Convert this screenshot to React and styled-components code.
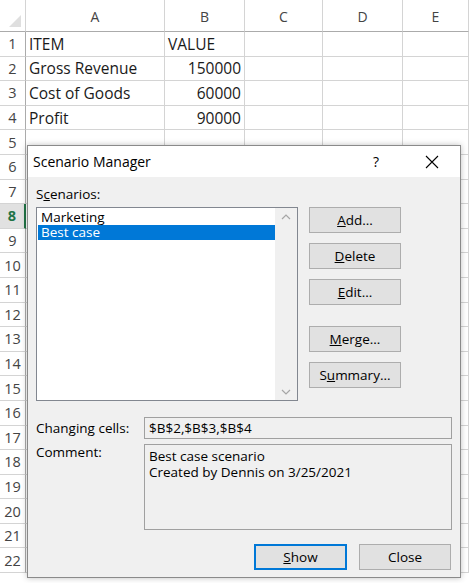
import React from 'react'
import styled, { createGlobalStyle } from 'styled-components'

const GlobalStyle = createGlobalStyle`
  html, body {
    margin: 0;
    padding: 0;
    background: #ffffff;
    overflow: hidden;
  }
  body {
    font-family: "Open Sans", "Noto Sans", sans-serif;
  }
`

const Page = styled.div`
  position: relative;
  width: 469px;
  height: 583px;
  overflow: hidden;
  background: #ffffff;
`

const Sheet = styled.div`
  display: grid;
  grid-template-columns: 26px 139px 80px 78px 80px 66px;
  grid-template-rows: 32px repeat(22, 24.6px);
`

const Corner = styled.div`
  position: relative;
  border-right: 1px solid #d4d4d4;
  border-bottom: 1px solid #ababab;
  &::after {
    content: '';
    position: absolute;
    right: 4px;
    bottom: 4px;
    border-style: solid;
    border-width: 0 0 12px 12px;
    border-color: transparent transparent #dfdfdf transparent;
  }
`

const ColHead = styled.div`
  display: flex;
  align-items: center;
  justify-content: center;
  padding-top: 2px;
  font-family: "Open Sans", sans-serif;
  font-size: 14px;
  color: #444444;
  border-right: 1px solid #d4d4d4;
  border-bottom: 1px solid #ababab;
`

const RowHead = styled.div`
  display: flex;
  align-items: center;
  justify-content: center;
  font-family: "Open Sans", sans-serif;
  font-size: 14.5px;
  color: ${p => (p.$active ? '#217346' : '#444444')};
  font-weight: ${p => (p.$active ? 700 : 400)};
  background: ${p => (p.$active ? '#e1e1e1' : '#ffffff')};
  border-bottom: 1px solid #d4d4d4;
  border-right: ${p => (p.$active ? '2px solid #217346' : '1px solid #ababab')};
`

const Cell = styled.div`
  display: flex;
  align-items: center;
  justify-content: ${p => (p.$num ? 'flex-end' : 'flex-start')};
  padding: 0 3px 0 3px;
  font-family: "Open Sans", sans-serif;
  font-size: 15.5px;
  color: #1a1a1a;
  white-space: nowrap;
  overflow: hidden;
  border-right: 1px solid #d4d4d4;
  border-bottom: 1px solid #d4d4d4;
`

const Dialog = styled.div`
  position: absolute;
  left: 27px;
  top: 145px;
  width: 434px;
  height: 433px;
  display: flex;
  flex-direction: column;
  background: #f0f0f0;
  border: 1px solid #8a8a8a;
  box-shadow: 0 0 6px rgba(0, 0, 0, 0.25);
  font-family: "Open Sans", "Noto Sans", sans-serif;
  font-size: 13.5px;
  color: #000000;
  box-sizing: border-box;
`

const TitleBar = styled.div`
  height: 31px;
  flex: none;
  display: flex;
  align-items: center;
  background: #ffffff;
  padding-left: 5px;
`

const Title = styled.span`
  flex: 1;
  font-size: 14px;
  color: #000000;
`

const TitleButton = styled.div`
  width: 56px;
  height: 31px;
  display: flex;
  align-items: center;
  justify-content: center;
  font-size: 14px;
  color: #000000;
`

const Body = styled.div`
  flex: 1;
  display: flex;
  flex-direction: column;
  padding: 9px 8px 0 8px;
`

const Label = styled.div`
  line-height: 16px;
  white-space: nowrap;
`

const TopRow = styled.div`
  display: flex;
  gap: 11px;
  margin-top: 5px;
`

const ListBox = styled.div`
  width: 262px;
  height: 194px;
  display: flex;
  box-sizing: border-box;
  background: #ffffff;
  border: 1px solid #828790;
`

const Items = styled.div`
  flex: 1;
  padding: 2px 0 0 1px;
`

const Item = styled.div`
  height: 15px;
  line-height: 15px;
  padding-left: 3px;
  background: ${p => (p.$selected ? '#0078d7' : 'transparent')};
  color: ${p => (p.$selected ? '#ffffff' : '#000000')};
`

const ScrollBar = styled.div`
  width: 22px;
  display: flex;
  flex-direction: column;
  justify-content: space-between;
  align-items: center;
  padding: 6px 0 5px;
  background: #f0f0f0;
`

const ButtonColumn = styled.div`
  display: flex;
  flex-direction: column;
  gap: 10px;
`

const Button = styled.div`
  width: ${p => p.$w || 92}px;
  height: 26px;
  box-sizing: border-box;
  display: flex;
  align-items: center;
  justify-content: center;
  background: #e1e1e1;
  border: ${p => (p.$default ? '2px solid #0078d7' : '1px solid #adadad')};
  margin-top: ${p => p.$gap || 0}px;
`

const FieldRow = styled.div`
  display: flex;
  align-items: flex-start;
  margin-top: ${p => p.$mt}px;
`

const FieldLabel = styled(Label)`
  width: 108px;
  flex: none;
  padding-top: ${p => p.$pt || 0}px;
`

const Field = styled.div`
  width: 308px;
  height: ${p => p.$h}px;
  box-sizing: border-box;
  background: #f0f0f0;
  border: 1px solid #a0a0a0;
  padding: ${p => p.$pad || '2px 4px'};
  line-height: 16px;
  white-space: pre-line;
`

const Footer = styled.div`
  display: flex;
  justify-content: flex-end;
  gap: 12px;
  margin-top: 14px;
  padding-right: 1px;
`

const Chevron = ({ up }) => (
  <svg width="10" height="6" viewBox="0 0 10 6">
    <path
      d={up ? 'M1 5 L5 1 L9 5' : 'M1 1 L5 5 L9 1'}
      fill="none"
      stroke="#a6a6a6"
      strokeWidth="1.2"
    />
  </svg>
)

const CloseIcon = () => (
  <svg width="14" height="14" viewBox="0 0 14 14">
    <path d="M1 1 L13 13 M13 1 L1 13" stroke="#000" strokeWidth="1.1" fill="none" />
  </svg>
)

const cols = ['A', 'B', 'C', 'D', 'E']
const data = {
  1: ['ITEM', 'VALUE'],
  2: ['Gross Revenue', '150000'],
  3: ['Cost of Goods', '60000'],
  4: ['Profit', '90000'],
}

function App() {
  const rows = Array.from({ length: 22 }, (_, i) => i + 1)
  return (
    <Page>
      <GlobalStyle />
      <Sheet>
        <Corner />
        {cols.map(c => <ColHead key={c}>{c}</ColHead>)}
        {rows.map(r => (
          <React.Fragment key={r}>
            <RowHead $active={r === 8}>{r}</RowHead>
            {cols.map((c, i) => {
              const v = data[r] ? data[r][i] : ''
              return (
                <Cell key={c} $num={r > 1 && i === 1}>{v}</Cell>
              )
            })}
          </React.Fragment>
        ))}
      </Sheet>

      <Dialog>
        <TitleBar>
          <Title>Scenario Manager</Title>
          <TitleButton>?</TitleButton>
          <TitleButton><CloseIcon /></TitleButton>
        </TitleBar>
        <Body>
          <Label>S<u>c</u>enarios:</Label>
          <TopRow>
            <ListBox>
              <Items>
                <Item>Marketing</Item>
                <Item $selected>Best case</Item>
              </Items>
              <ScrollBar>
                <Chevron up />
                <Chevron />
              </ScrollBar>
            </ListBox>
            <ButtonColumn>
              <Button><u>A</u>dd...</Button>
              <Button><u>D</u>elete</Button>
              <Button><u>E</u>dit...</Button>
              <Button $gap={11}><u>M</u>erge...</Button>
              <Button>S<u>u</u>mmary...</Button>
            </ButtonColumn>
          </TopRow>
          <FieldRow $mt={16}>
            <FieldLabel $pt={3}>Changing cells:</FieldLabel>
            <Field $h={22}>$B$2,$B$3,$B$4</Field>
          </FieldRow>
          <FieldRow $mt={5}>
            <FieldLabel>Comment:</FieldLabel>
            <Field $h={86} $pad="3px 4px">{'Best case scenario\nCreated by Dennis on 3/25/2021'}</Field>
          </FieldRow>
          <Footer>
            <Button $w={93} $default><u>S</u>how</Button>
            <Button>Close</Button>
          </Footer>
        </Body>
      </Dialog>
    </Page>
  )
}

export default App
